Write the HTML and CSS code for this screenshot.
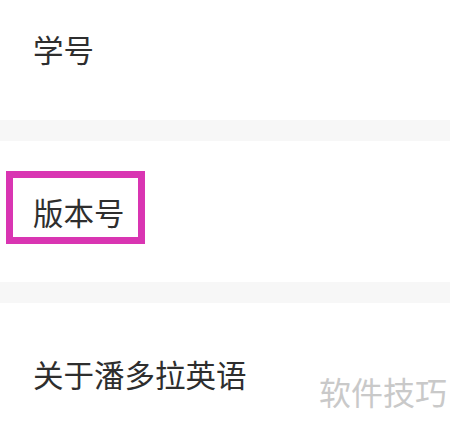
FILE: index.html
```html
<!DOCTYPE html>
<html lang="zh-CN">
<head>
  <meta charset="UTF-8" />
  <meta name="viewport" content="width=device-width, initial-scale=1.0"/>
  <title>设置</title>
  <link rel="stylesheet" href="styles.css">
</head>
<body>
  <div class="list">
    <div class="row first">学号</div>
    <div class="gap"></div>
    <div class="row">
      版本号
      <div class="mark"></div>
    </div>
    <div class="gap"></div>
    <div class="row">关于潘多拉英语</div>
  </div>
  <div class="watermark">软件技巧</div>
</body>
</html>
```

FILE: styles.css
```css
* {
  box-sizing: border-box;
}
body {
  font-family: "Noto Sans CJK SC", "Noto Sans", sans-serif;
  background-color: #fff;
  margin: 0;
  padding: 0;
  overflow: hidden;
  position: relative;
  height: 426px;
}
.list {
  display: flex;
  flex-direction: column;
}
.row {
  position: relative;
  height: 141px;
  padding: 0 33px;
  display: flex;
  align-items: center;
  font-size: 30.5px;
  color: #2e2e2e;
  background-color: #fff;
}
.row.first {
  height: 120px;
  padding-bottom: 22px;
}
.gap {
  height: 21px;
  background-color: #f7f7f7;
}
.mark {
  position: absolute;
  left: 6px;
  top: 30px;
  width: 139px;
  height: 73px;
  border: 7px solid #d935b2;
}
.watermark {
  position: absolute;
  left: 319px;
  top: 369px;
  font-size: 32px;
  color: #c9c9c9;
  line-height: 44px;
}
```
